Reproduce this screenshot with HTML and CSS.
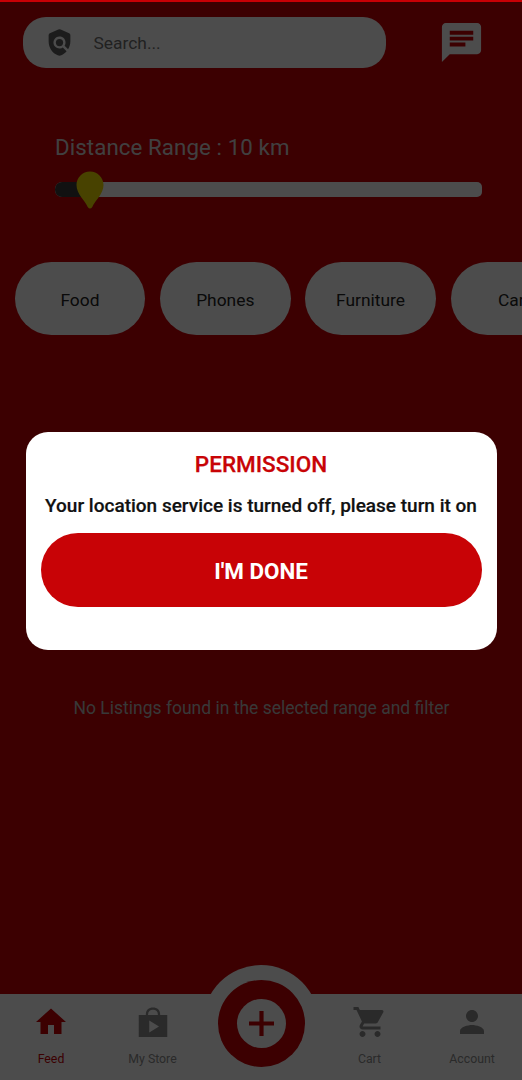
FILE: index.html
```html
<!DOCTYPE html>
<html lang="en">
<head>
<meta charset="utf-8">
<title>Feed</title>
<link rel="stylesheet" href="styles.css">
</head>
<body>
<div class="app">
  <header class="topbar">
    <div class="search">
      <svg class="search-icon" viewBox="0 0 24 24"><path d="M20 4.3l-7-3.1q-1-.4-2 0L4 4.3Q3 4.8 3 6v5c0 5.550 3.200 9.900 7.500 11.600q1.500.7 3 0c1.700-.7 3.200-1.900 4.380-3.310l-3.120-3.120a5 5 0 1 1 1.420-1.420l2.900 2.900C20.290 15.690 21 13.380 21 11V6q0-1.200-1-1.700z"/><circle cx="12" cy="12" r="3"/></svg>
      <span>Search...</span>
    </div>
    <svg class="chat" viewBox="0 0 24 24"><path d="M20 2H4c-1.1 0-1.99.9-1.99 2L2 22l4-4h14c1.1 0 2-.9 2-2V4c0-1.1-.9-2-2-2zM6 9h12v2H6V9zm8 5H6v-2h8v2zm4-6H6V6h12v2z"/></svg>
  </header>
  <section class="range">
    <div class="range-label">Distance Range : 10 km</div>
    <div class="track">
      <div class="fill"></div>
      <svg class="pin" viewBox="0 0 28 38"><path d="M14 .5C6.500.5.5 6.500.5 14c0 9 8.500 15.500 11.200 22q2.300 3 4.600 0C19 29.500 27.500 23 27.500 14 27.500 6.500 21.500.5 14 .5z"/></svg>
    </div>
  </section>
  <div class="chips">
    <div class="chip">Food</div>
    <div class="chip">Phones</div>
    <div class="chip">Furniture</div>
    <div class="chip">Cars</div>
  </div>
  <main class="empty">No Listings found in the selected range and filter</main>
  <nav class="tabs">
    <div class="tab active">
      <svg viewBox="0 0 24 24"><path d="M10 20v-6h4v6h5v-8h3L12 3 2 12h3v8z"/></svg>
      <span>Feed</span>
    </div>
    <div class="tab">
      <svg viewBox="0 0 24 24"><path d="M2.500 7.300H7.200C7.200 4 9.200 2.400 12 2.400s4.800 1.600 4.800 4.900h4.700V22h-19zM8.700 7.300h6.600C15.300 5 14 3.900 12 3.900S8.700 5 8.700 7.300zM9.500 11v8l6.500-4z" fill-rule="evenodd"/></svg>
      <span>My Store</span>
    </div>
    <div class="add">
      <div class="add-ring"><div class="add-core">
        <svg viewBox="0 0 24 24"><path d="M10 0h4v10h10v4H14v10h-4V14H0v-4h10z"/></svg>
      </div></div>
    </div>
    <div class="tab">
      <svg viewBox="0 0 24 24"><path d="M7 18c-1.100 0-1.990.9-1.990 2S5.900 22 7 22s2-.9 2-2-.9-2-2-2zM1 2v2h2l3.600 7.590-1.350 2.450c-.16.280-.25.610-.25.960 0 1.100.9 2 2 2h12v-2H7.420c-.14 0-.25-.11-.25-.25l.03-.12.9-1.630h7.450c.75 0 1.410-.41 1.750-1.030l3.580-6.490A1.003 1.003 0 0 0 20 4H5.210l-.94-2H1zm16 16c-1.100 0-1.990.9-1.990 2s.89 2 1.990 2 2-.9 2-2-.9-2-2-2z"/></svg>
      <span>Cart</span>
    </div>
    <div class="tab account">
      <svg viewBox="0 0 24 24"><path d="M12 12c2.210 0 4-1.790 4-4s-1.790-4-4-4-4 1.790-4 4 1.790 4 4 4zm0 2c-2.670 0-8 1.340-8 4v2h16v-2c0-2.660-5.330-4-8-4z"/></svg>
      <span>Account</span>
    </div>
  </nav>
</div>
<div class="scrim">
  <div class="dialog">
    <h1>PERMISSION</h1>
    <p>Your location service is turned off, please turn it on</p>
    <button class="done">I'M DONE</button>
  </div>
</div>
</body>
</html>
```
FILE: styles.css
```css
* { box-sizing: border-box; }
body { margin: 0; width: 522px; height: 1080px; overflow: hidden; position: relative; font-family: Roboto, sans-serif; }
svg { display: block; fill: currentColor; flex: none; }
.app { height: 1080px; background: #c80005; display: flex; flex-direction: column; border-top: 2px solid #c80005; overflow: hidden; }
.topbar { display: flex; padding: 15px 0 0 23px; height: 67px; color: #fff; }
.search { display: flex; align-items: center; width: 363px; height: 51px; padding-left: 22px; border-radius: 23px; background: #fff; color: #707070; font-size: 17.400px; }
.search-icon { width: 29px; height: 29px; color: #606060; margin-right: 19.500px; }
.chat { width: 47px; height: 47px; margin: 2px 0 0 52.300px; }
.range { padding: 64px 40px 0 55px; height: 193px; }
.range-label { color: #d8d8d8; font-size: 22.300px; line-height: 28px; white-space: nowrap; letter-spacing: .08px; }
.track { position: relative; margin-top: 21px; height: 15px; background: #fff; border-radius: 7px 5px 5px 7px; }
.fill { width: 35px; height: 15px; background: #3a3a3a; border-radius: 7px 0 0 7px; }
.pin { position: absolute; left: 20.500px; top: -11px; width: 28px; height: 38px; color: #f2dc00; }
.chips { display: flex; gap: 14.700px; padding-left: 14.700px; flex: none; }
.chip { flex: none; width: 130.600px; height: 73px; border-radius: 36.500px; background: #fff; color: #222; display: flex; align-items: center; justify-content: center; font-size: 17.400px; padding-top: 3px; }
.empty { flex: 1; padding: 362px 0 0 1px; text-align: center; color: #bcbcbc; font-size: 17.500px; line-height: 22px; }
.tabs { flex: none; height: 86.500px; background: #fff; display: grid; grid-template-columns: 102px 101px 116px 101px 102px; color: #8d8d8d; }
.tab { display: flex; flex-direction: column; align-items: center; padding-top: 10px; font-size: 12.300px; line-height: 16px; gap: 11px; }
.tab svg { width: 36px; height: 36px; }
.tab.active { color: #c80005; }
.tab.account { padding-left: 2px; }
.add { margin-top: -28.500px; height: 116px; width: 116px; border-radius: 50%; background: #fff; display: grid; place-items: center; }
.add-ring { width: 87px; height: 87px; border-radius: 50%; background: #c80005; display: grid; place-items: center; }
.add-core { width: 49px; height: 49px; border-radius: 50%; background: #fff; color: #c80005; display: grid; place-items: center; }
.add-core svg { width: 25px; height: 25px; }
.scrim { position: absolute; inset: 2px 0 0; background: rgba(0,0,0,.7); display: flex; align-items: center; justify-content: center; }
.dialog { width: 471px; height: 218px; border-radius: 22px; background: #fff; padding: 18px 15px 0; display: flex; flex-direction: column; text-align: center; }
h1 { margin: 0; color: #c80306; font-size: 22.500px; line-height: 28px; font-weight: 500; -webkit-text-stroke: .25px; }
p { margin: 16px -10px 0; color: #111; font-size: 19px; line-height: 24px; font-weight: 500; white-space: nowrap; -webkit-text-stroke: .2px; }
.done { margin-top: 14.500px; height: 74px; border: 0; border-radius: 37px; background: #c80306; color: #fff; font: 700 22.400px Roboto, sans-serif; padding-top: 3px; }
```
